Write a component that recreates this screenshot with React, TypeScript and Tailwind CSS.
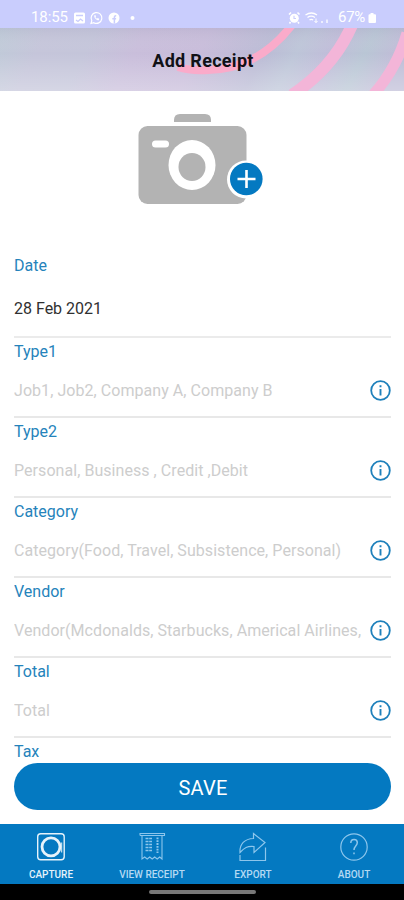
import type { ReactNode } from "react";

const fields = [
  { label: "Type1", placeholder: "Job1, Job2, Company A, Company B" },
  { label: "Type2", placeholder: "Personal, Business , Credit ,Debit" },
  { label: "Category", placeholder: "Category(Food, Travel, Subsistence, Personal)" },
  { label: "Vendor", placeholder: "Vendor(Mcdonalds, Starbucks, Americal Airlines," },
  { label: "Total", placeholder: "Total" },
];

export default function App() {
  return (
    <div className="flex h-[900px] w-[404px] flex-col overflow-hidden bg-white font-['Roboto',sans-serif]">
      <StatusBar />
      <Header />

      <main className="flex min-h-0 flex-1 flex-col pr-[13px] pl-3.5">
        <div className="flex h-[165px] shrink-0 justify-center pt-5">
          <CameraIcon />
        </div>

        <div className="flex h-[82px] shrink-0 flex-col border-b-2 border-[#ebebeb]">
          <Label>Date</Label>
          <span className="mt-[23px] text-base leading-5 text-[#303030]">28 Feb 2021</span>
        </div>

        <div className="min-h-0 flex-1 overflow-hidden">
          {fields.map((field) => (
            <Field key={field.label} {...field} />
          ))}
          <div className="pt-1">
            <Label>Tax</Label>
          </div>
        </div>

        <button className="mb-3.5 h-[47px] shrink-0 rounded-full bg-[#0479c1] pt-0.5 pl-px text-xl tracking-[0.2px] text-white">
          SAVE
        </button>
      </main>

      <nav className="grid h-[60px] shrink-0 grid-cols-4 bg-[#0479c1]">
        <Tab label="CAPTURE" active>
          <CaptureIcon />
        </Tab>
        <Tab label="VIEW RECEIPT">
          <ReceiptIcon />
        </Tab>
        <Tab label="EXPORT">
          <ExportIcon />
        </Tab>
        <Tab label="ABOUT">
          <AboutIcon />
        </Tab>
      </nav>

      <div className="flex h-4 shrink-0 justify-center bg-black pt-1.5">
        <div className="h-1 w-[107px] rounded-full bg-[#777]" />
      </div>
    </div>
  );
}

function StatusBar() {
  return (
    <div className="flex h-7 shrink-0 items-center justify-between bg-[#c9cdfd] pt-[7px] pr-[28px] pl-[31px] text-white">
      <div className="flex items-center">
        <span className="w-[42px] text-[15px] tracking-[-0.1px]">18:55</span>
        <svg width="65" height="14" viewBox="0 0 65 14">
          <rect x="1" y="1.5" width="11" height="11" rx="1.5" fill="#fff" />
          <path d="M3 4.5h7M3 9l2 1.5L7.5 8l2.5 2" fill="none" stroke="#c9cdfd" strokeWidth="1.3" />
          <path d="M18 12.5l.8-2.8a5.4 5.4 0 1 1 2 2z" fill="none" stroke="#fff" strokeWidth="1.2" />
          <path d="M21.4 4.3c-.9 2.3 2.1 5.3 4.5 5l.3-1.6-1.5-.6-.8.7-1.5-1.6.6-.8-.6-1.3z" fill="#fff" />
          <circle cx="41" cy="7" r="5.5" fill="#fff" />
          <path d="M41.4 12.5V6.2c0-1 .6-1.5 1.8-1.4M39.3 7.8h3.8" fill="none" stroke="#c9cdfd" strokeWidth="1.5" />
          <circle cx="59.5" cy="7" r="2" fill="#fff" />
        </svg>
      </div>
      <div className="flex items-center">
        <svg className="mr-[3px]" width="48" height="14" viewBox="0 0 48 14">
          <path d="M2 3.5L4 1.5M10.5 1.5l2 2M3.5 11l-1 1.5M11 11l1 1.5" stroke="#fff" strokeWidth="1.6" />
          <circle cx="7.3" cy="7.2" r="4.5" fill="#fff" />
          <path d="M7 4.8v2.7h2" fill="none" stroke="#c9cdfd" strokeWidth="1.1" />
          <path d="M18.5 4q6-4 11.5 0M20.5 6.5q3.7-2.7 7.5 0M22.5 9q1.8-1.4 3.6 0" fill="none" stroke="#fff" strokeWidth="1.3" />
          <path d="M29 7.5v4M27.5 10l1.5 1.7 1.5-1.7" fill="none" stroke="#fff" />
          <path d="M35 10v2M40 8.5V12" stroke="#fff" strokeWidth="1.3" />
        </svg>
        <span className="w-[30px] text-[15px] tracking-[-0.3px]">67%</span>
        <svg width="8" height="12" viewBox="0 0 8 12">
          <path d="M2.5 1h3v1.2H7a1 1 0 0 1 1 1V10a1 1 0 0 1-1 1H1.5a1 1 0 0 1-1-1V3.2a1 1 0 0 1 1-1h1z" fill="#fff" />
        </svg>
      </div>
    </div>
  );
}

function Header() {
  return (
    <header className="relative flex h-[63px] shrink-0 items-center justify-center overflow-hidden bg-[#c7c6dc]">
      <svg className="absolute inset-0" width="404" height="63" viewBox="0 0 404 63">
        <defs>
          <linearGradient id="sky" x1="0" y1="0" x2="1" y2="0.08">
            <stop offset="0" stopColor="#bfcbd8" />
            <stop offset="0.12" stopColor="#c5c5da" />
            <stop offset="0.24" stopColor="#c4c5da" />
            <stop offset="0.36" stopColor="#c9bedb" />
            <stop offset="0.52" stopColor="#c8bcda" />
            <stop offset="0.68" stopColor="#bbbbd5" />
            <stop offset="0.76" stopColor="#bdc5d8" />
            <stop offset="0.84" stopColor="#c0bdd9" />
            <stop offset="0.93" stopColor="#b9c6d5" />
            <stop offset="1" stopColor="#bfbdd7" />
          </linearGradient>
          <linearGradient id="fade" x1="0" y1="0" x2="0" y2="1">
            <stop offset="0" stopColor="#9c9cb8" stopOpacity="0.2" />
            <stop offset="0.4" stopColor="#fff" stopOpacity="0" />
            <stop offset="1" stopColor="#fff" stopOpacity="0.3" />
          </linearGradient>
        </defs>
        <rect width="404" height="63" fill="url(#sky)" />
        <rect width="404" height="63" fill="url(#fade)" />
        <g fill="none">
          <path d="M292 -3Q258 41 208 42Q190 43 178 39" stroke="#faabca" strokeWidth="8" />
          <path d="M352 -3Q334 39 292 67" stroke="#f3b5d8" strokeWidth="12" />
          <path d="M407 5Q397 40 373 67" stroke="#f3b5d8" strokeWidth="11" />
        </g>
      </svg>
      <h1 className="relative pt-0.5 pl-0.5 text-lg font-bold tracking-[0.3px] text-[#111116]">Add Receipt</h1>
    </header>
  );
}

function Label({ children }: { children: ReactNode }) {
  return <div className="text-base leading-5 text-[#2583bb]">{children}</div>;
}

function Field({ label, placeholder }: { label: string; placeholder: string }) {
  return (
    <div className="h-20 border-b-2 border-[#e8e8e8] pt-1">
      <Label>{label}</Label>
      <div className="mt-[18px] flex h-[22px] items-center justify-between">
        <span className="text-base tracking-[0.055px] whitespace-nowrap text-[#cdcdcd]">{placeholder}</span>
        <svg className="shrink-0" width="21" height="22" viewBox="0 0 21 22">
          <circle cx="10.5" cy="10.5" r="9.3" fill="none" stroke="#1e80bb" strokeWidth="1.8" />
          <path d="M10.5 5.3v2M10.5 9v6.5" stroke="#1e80bb" strokeWidth="1.9" />
        </svg>
      </div>
    </div>
  );
}

function CameraIcon() {
  return (
    <svg className="mr-[3px]" width="130" height="100" viewBox="136 111 130 100">
      <path d="M174 122v-2q0-6 6-6h25q6 0 6 6v2z" fill="#b3b3b3" />
      <rect x="138.5" y="126" width="108" height="78" rx="9" fill="#b3b3b3" />
      <rect x="152" y="140.5" width="17" height="7" rx="3.5" fill="#fff" />
      <ellipse cx="192" cy="165" rx="23.5" ry="25" fill="#fff" />
      <ellipse cx="192" cy="167" rx="13.5" ry="14" fill="#b3b3b3" />
      <circle cx="246" cy="179.5" r="19" fill="#fff" />
      <circle cx="246.3" cy="179" r="16.3" fill="#0479c1" />
      <path d="M237.5 179h18M246.5 170v18" stroke="#fff" strokeWidth="2.6" />
    </svg>
  );
}

function Tab({ label, active, children }: { label: string; active?: boolean; children: ReactNode }) {
  return (
    <div className={`flex flex-col items-center pt-2 ${active ? "text-[#e6f3fb]" : "text-[#8dc6ec]"}`}>
      {children}
      <span className={`mt-[7px] pl-px text-[10px] leading-3 font-medium ${active ? "" : "text-[#b5daf3]"}`}>
        {label}
      </span>
    </div>
  );
}

function CaptureIcon() {
  return (
    <svg width="30" height="30" viewBox="0 0 30 30" fill="none" stroke="currentColor">
      <rect x="1.7" y="1.7" width="26.5" height="26" rx="3" strokeWidth="1.4" />
      <circle cx="15" cy="14.8" r="9" strokeWidth="2.8" />
      <path d="M25.7 10.5v10" strokeWidth="1" />
    </svg>
  );
}

function ReceiptIcon() {
  return (
    <svg width="30" height="30" viewBox="0 0 30 30" fill="none" stroke="currentColor" strokeWidth="1.1">
      <path d="M3 3.5v-2h24.500v2H3M5 3.500V27l2.700-2 2.500 2 2.500-2 2.500 2 2.500-2 2.500 2 2.500-2 2.300 2V3.500" />
      <path d="M8.500 6.500H15M8.500 9.500H15M8.500 12.500H15M8.500 15.500H15M8.500 18.500H15" strokeWidth="1.500" strokeDasharray="3 .7" />
      <path d="M20.500 5.500V21" strokeWidth="2" strokeDasharray="1.800 1" />
    </svg>
  );
}

function ExportIcon() {
  return (
    <svg width="30" height="30" viewBox="0 0 30 30" fill="none" stroke="currentColor" strokeWidth="1.2">
      <path d="M2 20.500C1.500 12 6.500 6.800 15.500 6.500v-5L27 10.500 16 20.500v-6C9 14 6.500 15.500 2 20.500z" />
      <path d="M2 23v5.500h25.500V15.500" />
    </svg>
  );
}

function AboutIcon() {
  return (
    <svg width="30" height="30" viewBox="0 0 30 30" fill="none" stroke="currentColor" strokeWidth="1.2">
      <circle cx="15" cy="15" r="13.2" />
      <path d="M11.800 11c0-5 6.500-4.500 6.500-.5 0 3.500-3.300 3.500-3.300 7.500M15 20.500v1.800" strokeWidth="1.500" />
    </svg>
  );
}
